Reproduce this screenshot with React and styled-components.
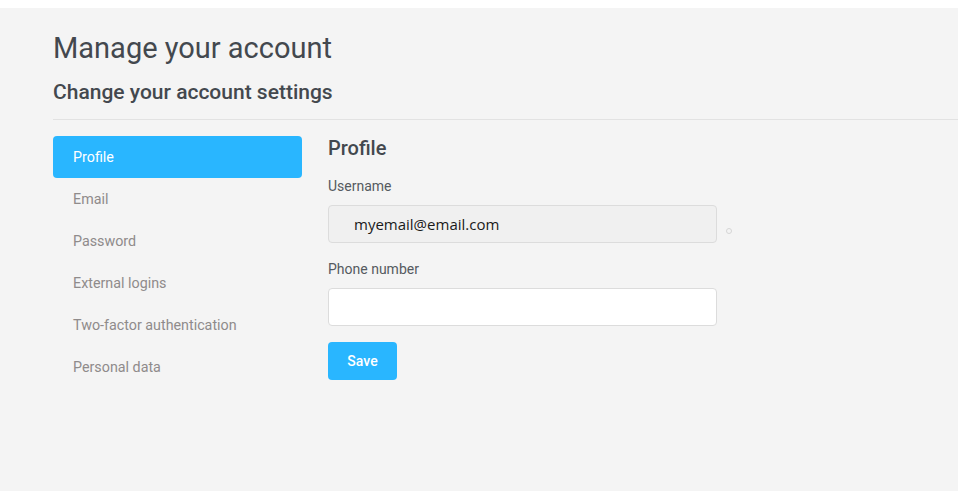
import styled, { createGlobalStyle } from "styled-components";

const GlobalStyle = createGlobalStyle`
  html, body {
    margin: 0;
    padding: 0;
    background: #ffffff;
  }
  body {
    font-family: Roboto, "Liberation Sans", sans-serif;
  }
  * {
    box-sizing: border-box;
  }
`;

const menu = [
  "Profile",
  "Email",
  "Password",
  "External logins",
  "Two-factor authentication",
  "Personal data",
];

export default function App() {
  return (
    <>
      <GlobalStyle />
      <Page>
        <Header>
          <Title>Manage your account</Title>
          <SubTitle>Change your account settings</SubTitle>
        </Header>
        <Divider />
        <Body>
          <Nav>
            {menu.map((item, i) => (
              <NavItem key={item} $active={i === 0}>
                {item}
              </NavItem>
            ))}
          </Nav>
          <Content>
            <SectionTitle>Profile</SectionTitle>
            <Field>
              <Label>Username</Label>
              <InputRow>
                <Input $disabled value="myemail@email.com" readOnly />
                <Dot />
              </InputRow>
            </Field>
            <Field>
              <Label>Phone number</Label>
              <Input />
            </Field>
            <SaveButton>Save</SaveButton>
          </Content>
        </Body>
      </Page>
    </>
  );
}

const Page = styled.div`
  margin-top: 8px;
  height: 483px;
  width: 958px;
  background: #f4f4f4;
  overflow: hidden;
`;

const Header = styled.div`
  padding: 0 0 0 53px;
`;

const Title = styled.h1`
  margin: 0;
  padding-top: 22px;
  font-size: 29px;
  font-weight: 400;
  color: #43484e;
  line-height: 36px;
`;

const SubTitle = styled.h2`
  margin: 0;
  padding-top: 12px;
  font-size: 21px;
  font-weight: 500;
  color: #43484e;
  line-height: 28px;
`;

const Divider = styled.div`
  margin: 13px 0 0 53px;
  height: 1px;
  background: #e2e2e2;
`;

const Body = styled.div`
  display: flex;
  gap: 26px;
  padding: 16px 0 0 53px;
`;

const Nav = styled.div`
  width: 249px;
  display: flex;
  flex-direction: column;
`;

const NavItem = styled.div`
  height: 42px;
  display: flex;
  align-items: center;
  padding-left: 20px;
  font-size: 14.3px;
  border-radius: 4px;
  color: ${(p) => (p.$active ? "#ffffff" : "#8f8b8b")};
  background: ${(p) => (p.$active ? "#29b6ff" : "transparent")};
`;

const Content = styled.div`
  display: flex;
  flex-direction: column;
  width: 420px;
`;

const SectionTitle = styled.h3`
  margin: 0;
  font-size: 20px;
  font-weight: 500;
  color: #43484e;
  line-height: 24px;
`;

const Field = styled.div`
  display: flex;
  flex-direction: column;
  margin-top: 17px;
`;

const Label = styled.label`
  font-size: 14px;
  color: #555a60;
  line-height: 18px;
  margin-bottom: 10px;
`;

const InputRow = styled.div`
  display: flex;
  align-items: center;
  gap: 9px;
`;

const Input = styled.input`
  width: 389px;
  height: 38px;
  border: 1px solid #dcdcdc;
  border-radius: 4px;
  padding: 0 0 0 25px;
  font-family: "Open Sans", "Noto Sans", sans-serif;
  font-size: 15px;
  color: #1a1a1a;
  background: ${(p) => (p.$disabled ? "#f0f0f0" : "#ffffff")};
  outline: none;
  flex-shrink: 0;
`;

const Dot = styled.span`
  flex-shrink: 0;
  width: 6px;
  height: 6px;
  border-radius: 50%;
  border: 1px solid #d6d6d6;
  margin-top: 14px;
`;

const SaveButton = styled.button`
  margin-top: 16px;
  width: 69px;
  height: 38px;
  border: none;
  border-radius: 4px;
  background: #29b6ff;
  color: #ffffff;
  font-family: Roboto, "Liberation Sans", sans-serif;
  font-size: 14px;
  font-weight: 500;
`;
